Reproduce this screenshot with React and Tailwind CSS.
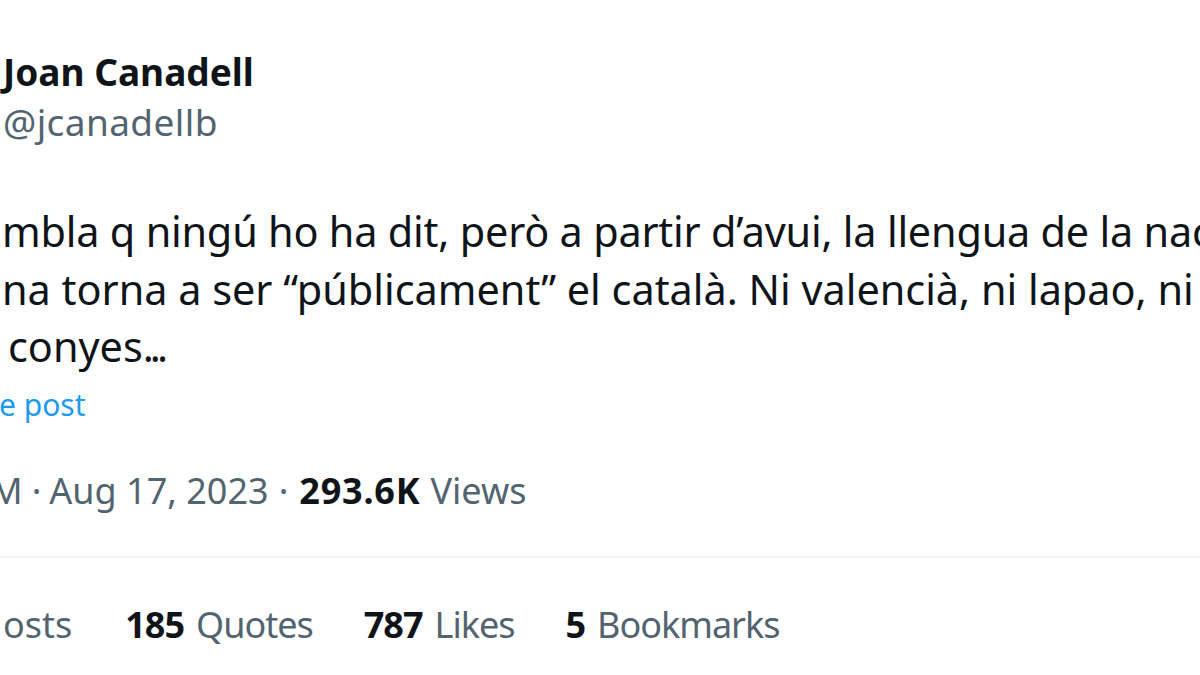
export default function App() {
  return (
    <div className="w-[1200px] h-[675px] overflow-hidden bg-white text-[#0f1419] font-['Noto_Sans',sans-serif]">
      <div className="pt-[47px]">
        <div className="pl-[3px] text-[37px] leading-[50px] font-bold whitespace-nowrap">Joan Canadell</div>
        <div className="pl-[3px] text-[37px] leading-[50px] tracking-[0.4px] text-[#536471] whitespace-nowrap">@jcanadellb</div>
      </div>

      <div className="mt-[56px] text-[41.4px] leading-[57.5px] whitespace-nowrap">
        <div className="pl-[2px] tracking-[-0.2px]">mbla q ningú ho ha dit, però a partir d’avui, la llengua de la nació</div>
        <div className="pl-[2px]">na torna a ser “públicament” el català. Ni valencià, ni lapao, ni</div>
        <div className="pl-[8px]">
          conyes<span className="tracking-[-4px]">...</span>
        </div>
      </div>

      <div className="mt-[4px] -ml-[1px] text-[30px] leading-[50px] text-[#1d9bf0] whitespace-nowrap">e post</div>

      <div className="mt-[36px] -ml-[10px] flex items-center text-[36px] leading-[50px] text-[#536471] whitespace-nowrap">
        <span>M</span>
        <span className="pl-[9px] pr-[8px]">·</span>
        <span>Aug 17, 2023</span>
        <span className="pl-[10px] pr-[11px]">·</span>
        <span className="font-bold tracking-[0.8px] text-[#0f1419]">293.6K</span>
        <span className="ml-[10px]">Views</span>
      </div>

      <div className="mt-[40px] h-[2px] bg-[#eff3f4]" />

      <div className="mt-[42px] ml-[3px] flex items-center gap-[51px] text-[36px] leading-[50px] tracking-[-1px] whitespace-nowrap">
        <span className="mr-[2px] tracking-[0px] text-[#536471]">osts</span>
        <span>
          <span className="font-bold">185</span>
          <span className="ml-[12px] text-[#536471]">Quotes</span>
        </span>
        <span>
          <span className="font-bold">787</span>
          <span className="ml-[12px] text-[#536471]">Likes</span>
        </span>
        <span>
          <span className="font-bold">5</span>
          <span className="ml-[12px] text-[#536471]">Bookmarks</span>
        </span>
      </div>
    </div>
  );
}
